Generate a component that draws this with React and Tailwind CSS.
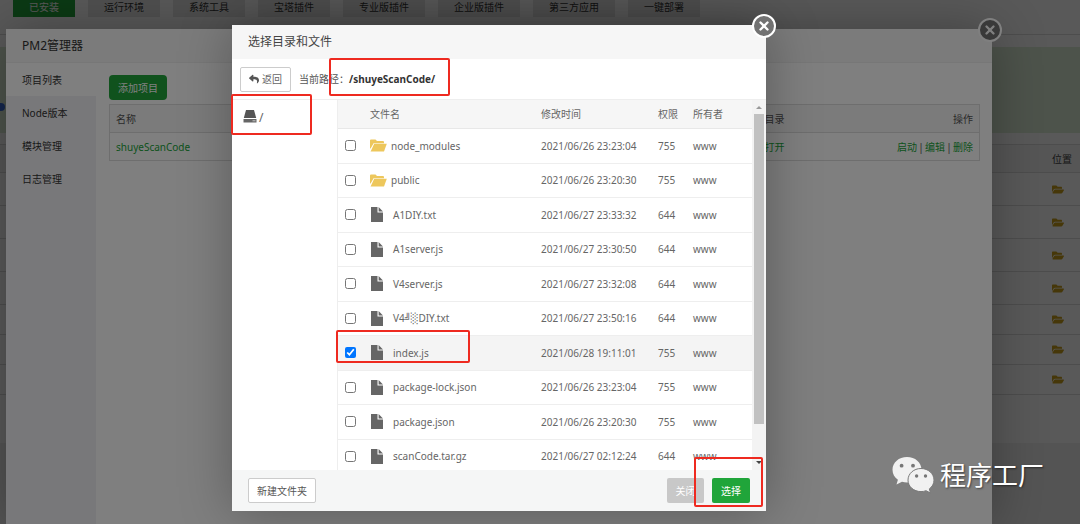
import { useState } from 'react';
import { FaFolderOpen, FaReply } from 'react-icons/fa';
import { X } from 'lucide-react';

const tabs = ['已安装', '运行环境', '系统工具', '宝塔插件', '专业版插件', '企业版插件', '第三方应用', '一键部署'];

const menu = ['项目列表', 'Node版本', '模块管理', '日志管理'];

const files = [
  { name: 'node_modules', dir: true, time: '2021/06/26 23:23:04', mode: '755' },
  { name: 'public', dir: true, time: '2021/06/26 23:20:30', mode: '755' },
  { name: 'A1DIY.txt', time: '2021/06/27 23:33:32', mode: '644' },
  { name: 'A1server.js', time: '2021/06/27 23:30:50', mode: '644' },
  { name: 'V4server.js', time: '2021/06/27 23:32:08', mode: '644' },
  { name: 'V4╝░DIY.txt', time: '2021/06/27 23:50:16', mode: '644' },
  { name: 'index.js', time: '2021/06/28 19:11:01', mode: '755' },
  { name: 'package-lock.json', time: '2021/06/26 23:23:04', mode: '755' },
  { name: 'package.json', time: '2021/06/26 23:20:30', mode: '755' },
  { name: 'scanCode.tar.gz', time: '2021/06/27 02:12:24', mode: '644' },
];

function FolderIcon() {
  return (
    <svg viewBox="0 0 17 13" className="w-[17px] h-[13px] shrink-0">
      <path d="M0 9.500V1.500Q0 0.500 1 0.500H5.500L7 2H13Q14 2 14 3V4.200H3.600L0.600 9.500Z" fill="#edc75c" />
      <path d="M4.200 4.800H16.800L14 12.500H0.600Z" fill="#edc75c" />
    </svg>
  );
}

function FileIcon() {
  return (
    <svg viewBox="0 0 12 15" className="w-3 h-[15px] ml-px mr-px shrink-0">
      <path d="M0 0H6.5V5.5H12V15H0Z" fill="#666" />
      <path d="M7.6 0L12 4.4H7.6Z" fill="#666" />
    </svg>
  );
}

function DiskIcon() {
  return (
    <svg viewBox="0 0 14 13" className="w-[14px] h-[13px]">
      <path d="M3 0H11L13.2 8H0.8Z" fill="#555" />
      <path d="M0.5 9H13.5V12.5H0.5Z" fill="#666" />
      <path d="M9.5 10.8H12.5" stroke="#ddd" strokeWidth="0.8" />
    </svg>
  );
}

function WechatIcon() {
  return (
    <svg viewBox="0 0 42 38" className="w-[42px] h-[38px]">
      <path
        d="M15 1C6.800 1 0.500 6.500 0.500 13.700C0.500 17.800 2.500 21.300 5.900 23.700L4.500 28.500L10 25.700C11.600 26.200 13.300 26.400 15 26.400C23.200 26.400 29.500 20.800 29.500 13.700C29.500 6.500 23.200 1 15 1Z"
        fill="#f1f1f1"
      />
      <path
        d="M29 12.500C21.800 12.500 16 17.600 16 24.100C16 30.600 21.800 35.600 29 35.600C30.800 35.600 32.500 35.300 34 34.700L38.500 37L37.300 32.900C40.200 30.800 42 27.700 42 24.100C42 17.600 36.200 12.500 29 12.500Z"
        fill="#f1f1f1"
        stroke="#7a7a7a"
        strokeWidth="1"
      />
      <circle cx="9.600" cy="9.700" r="1.900" fill="#777" />
      <circle cx="21" cy="9.700" r="1.900" fill="#777" />
      <circle cx="24.600" cy="20" r="1.700" fill="#777" />
      <circle cx="33.500" cy="20" r="1.700" fill="#777" />
    </svg>
  );
}

function CloseButton() {
  return (
    <button
      aria-label="关闭窗口"
      className="absolute -top-[11px] -right-[10px] w-6 h-6 rounded-full border-2 border-white bg-[#727272] flex items-center justify-center"
    >
      <X className="w-[14px] h-[14px] text-white" strokeWidth={4} />
    </button>
  );
}

function SoftwarePage() {
  return (
    <div className="min-h-screen bg-[#f2f2f2]">
      <div className="bg-white">
        <div className="h-[35px] pl-[13px] flex items-start gap-[13px] border-b border-[#ddd]">
          {tabs.map((tab, i) => (
            <button
              key={tab}
              className={`px-4 pb-[3px] leading-[14px] whitespace-nowrap ${i === 0 ? 'bg-[#20a53a] text-white' : 'bg-[#e6e6e6] text-[#333]'}`}
            >
              {tab}
            </button>
          ))}
        </div>
        <div className="h-[97px] pt-3">
          <div className="h-[86px] pt-14 bg-[#dff0d8]">
            <div className="w-[5px] h-2 rounded-r-full bg-[#3b6fe0]" />
          </div>
        </div>
        <table className="w-full mt-3 border-t border-[#ddd]">
          <thead>
            <tr className="h-[28px] bg-[#f6f6f6] border-b border-[#ddd]">
              <th className="font-normal text-right pr-2 text-[#444]">位置</th>
            </tr>
          </thead>
          <tbody>
            {[0, 1, 2, 3, 4, 5, 6].map((row) => (
              <tr key={row} className={`border-b border-[#ddd] ${row < 4 ? 'h-[33px]' : 'h-[30px]'}`}>
                <td className="pr-4">
                  <FaFolderOpen className="ml-auto w-3 h-[11px] text-[#c9a01c]" />
                </td>
              </tr>
            ))}
          </tbody>
        </table>
        <div className="h-12" />
      </div>
    </div>
  );
}

function Pm2Dialog() {
  return (
    <div className="relative flex-1 flex flex-col bg-white shadow-[1px_1px_50px_rgba(0,0,0,0.3)]">
      <CloseButton />
      <h2 className="h-[34px] px-4 flex items-center text-xs text-[#333] bg-[#f6f6f6] border-b border-[#eee]">PM2管理器</h2>
      <div className="flex-1 flex">
        <nav className="w-[90px] bg-[#f0f0f4] text-[#333]">
          {menu.map((item, i) => (
            <a key={item} href="#" className={`h-[33px] pl-4 flex items-center ${i === 0 ? 'bg-white' : ''}`}>
              {item}
            </a>
          ))}
        </nav>
        <div className="flex-1 pt-3 pl-[13px] pr-3">
          <button className="h-[25px] px-[9px] rounded-sm bg-[#20a53a] text-white">添加项目</button>
          <table className="w-full mt-1 border border-[#ddd]">
            <thead>
              <tr className="h-[28px] bg-[#f6f6f6] border-b border-[#ddd] text-[#555]">
                <th className="pl-[6px] font-normal text-left">名称</th>
                <th className="w-[120px] font-normal text-left">目录</th>
                <th className="w-[95px] pr-[6px] font-normal text-right">操作</th>
              </tr>
            </thead>
            <tbody>
              <tr className="h-[28px] text-[#20a53a]">
                <td className="pl-[6px]">
                  <a href="#">shuyeScanCode</a>
                </td>
                <td>
                  <a href="#">打开</a>
                </td>
                <td className="pr-[6px]">
                  <div className="flex justify-end">
                    <a href="#">启动</a>
                    <span className="w-2 text-center text-[#555]">|</span>
                    <a href="#">编辑</a>
                    <span className="w-2 text-center text-[#555]">|</span>
                    <a href="#">删除</a>
                  </div>
                </td>
              </tr>
            </tbody>
          </table>
        </div>
      </div>
    </div>
  );
}

function FileDialog() {
  const [checked, setChecked] = useState(['index.js']);

  const toggle = (name) => {
    setChecked((prev) => (prev.includes(name) ? prev.filter((n) => n !== name) : [...prev, name]));
  };

  return (
    <div className="relative flex-1 bg-white shadow-[1px_1px_50px_rgba(0,0,0,0.3)] text-[#666]">
      <CloseButton />
      <h2 className="h-[34px] px-4 flex items-center text-xs text-[#444] bg-[#f6f6f6]">选择目录和文件</h2>

      <div className="h-[41px] px-2 flex items-center gap-2 border-b border-[#eee]">
        <button className="w-[51px] h-[25px] flex items-center justify-center gap-[3px] border border-[#ccc] rounded-xs">
          <FaReply className="w-[10px] h-[10px] text-[#555]" />
          返回
        </button>
        <div className="text-[#555]">
          当前路径：
          <b className="text-[#333]">/shuyeScanCode/</b>
        </div>
      </div>

      <div className="flex h-[370px] overflow-hidden">
        <div className="w-[106px] shrink-0 pt-[10px] pl-[11px] flex items-start gap-[2px] border-r border-[#eee]">
          <DiskIcon />
          <span className="text-xs leading-4">/</span>
        </div>

        <table className="flex-1 table-fixed self-start">
          <thead>
            <tr className="h-[28px] bg-[#f6f6f6] border-b border-[#e8e8e8] text-left">
              <th className="w-8"></th>
              <th className="font-normal">文件名</th>
              <th className="w-[117px] font-normal">修改时间</th>
              <th className="w-[35px] font-normal">权限</th>
              <th className="w-[59px] font-normal">所有者</th>
            </tr>
          </thead>
          <tbody>
            {files.map((file) => (
              <tr
                key={file.name}
                className={`odd:h-[35px] even:h-[34px] border-b border-[#eee] ${checked.includes(file.name) ? 'bg-[#f4f4f4]' : ''}`}
              >
                <td className="pl-[7px]">
                  <input
                    type="checkbox"
                    aria-label={file.name}
                    checked={checked.includes(file.name)}
                    onChange={() => toggle(file.name)}
                    className="block w-[11px] h-[11px]"
                  />
                </td>
                <td>
                  <div className="flex items-center gap-1">
                    {file.dir ? <FolderIcon /> : <FileIcon />}
                    <span className={file.dir ? '' : 'pl-[5px]'}>{file.name}</span>
                  </div>
                </td>
                <td>{file.time}</td>
                <td>{file.mode}</td>
                <td>www</td>
              </tr>
            ))}
          </tbody>
        </table>

        {/* scrollbar */}
        <div className="w-[14px] shrink-0 py-[6px] px-[2px] flex flex-col items-center bg-[#f3f3f3]">
          <div className="border-x-3 border-b-3 border-x-transparent border-b-[#999]" />
          <div className="w-full h-[310px] mt-[5px] bg-[#c1c1c1]" />
          <div className="mt-auto border-x-3 border-t-3 border-x-transparent border-t-[#444]" />
        </div>
      </div>

      <div className="h-[41px] px-4 flex items-center gap-2 bg-[#f5f6f6]">
        <button className="h-[25px] px-2 border border-[#ccc] rounded-xs bg-white text-[#555]">新建文件夹</button>
        <button className="ml-auto w-[37px] h-[25px] rounded-xs bg-[#c8c8c8] text-white">关闭</button>
        <button className="w-[38px] h-[25px] rounded-xs bg-[#20a53a] text-white">选择</button>
      </div>

      {/* highlight marks */}
      <div className="absolute left-[97px] top-[33px] w-[121px] h-[38px] border-2 border-[#ee2a20] rounded-xs" />
      <div className="absolute -left-px top-[69px] w-[81px] h-[41px] border-2 border-[#ee2a20] rounded-xs" />
      <div className="absolute left-[104px] top-[305px] w-[134px] h-[33px] border-2 border-[#ee2a20] rounded-xs" />
      <div className="absolute right-[3px] bottom-1 w-[69px] h-[50px] border-2 border-[#ee2a20] rounded-xs" />
    </div>
  );
}

export default function App() {
  return (
    <div className="relative min-h-screen overflow-hidden text-[10px] leading-4 font-['Noto_Sans','DejaVu_Sans','Noto_Sans_CJK_SC',sans-serif]">
      <SoftwarePage />

      <div className="absolute inset-0 pt-[29px] pl-[6px] pr-[88px] flex bg-black/30">
        <Pm2Dialog />
      </div>

      <div className="absolute inset-0 pt-[25px] pl-[232px] pr-[314px] flex items-start bg-black/50">
        <FileDialog />
      </div>

      <div className="absolute right-9 bottom-[30px] flex items-center gap-[6px] text-white">
        <WechatIcon />
        <span className="text-[26px] leading-9 [text-shadow:1px_1px_2px_rgba(0,0,0,0.5)]">程序工厂</span>
      </div>
    </div>
  );
}
